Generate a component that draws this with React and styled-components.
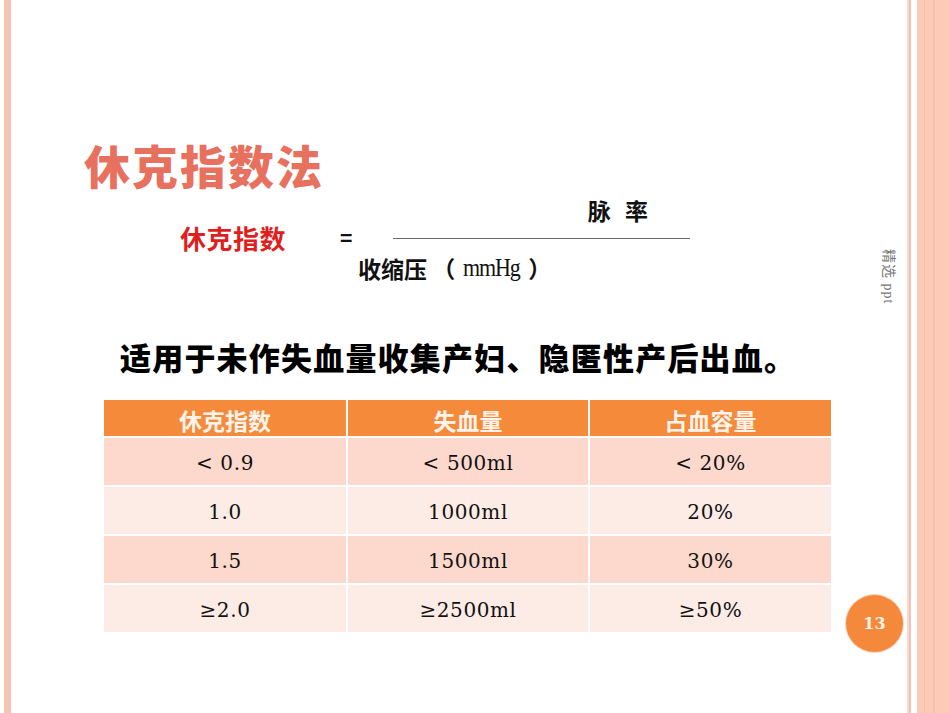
import React from "react";
import styled, { createGlobalStyle } from "styled-components";

const GlobalStyle = createGlobalStyle`
  html, body {
    margin: 0;
    padding: 0;
    background: #ffffff;
  }
  body {
    font-family: "Noto Sans CJK SC", "Liberation Sans", sans-serif;
  }
`;

const Slide = styled.div`
  width: 950px;
  height: 713px;
  display: flex;
  overflow: hidden;
  background: #ffffff;
`;

const LeftEdge = styled.div`
  width: 11px;
  flex: none;
  background: linear-gradient(
    to right,
    #ffffff 0 4px,
    #f6c3b4 4px 11px
  );
`;

const RightEdge = styled.div`
  width: 43px;
  flex: none;
  background: linear-gradient(
    to right,
    #fad8cf 0 2px,
    #f5c0b0 2px 4px,
    #ffffff 4px 10px,
    #fdcab8 10px 17px,
    #f7bfa9 17px 18px,
    #fdcab8 18px 26px,
    #f7bfa9 26px 28px,
    #fdcab8 28px 43px
  );
`;

const Main = styled.main`
  width: 834px;
  flex: none;
  display: flex;
  flex-direction: column;
  padding-top: 136px;
`;

const Title = styled.h1`
  margin: 0 0 0 73px;
  font-size: 46px;
  line-height: 56px;
  font-weight: 900;
  color: #e8705e;
  letter-spacing: 2px;
`;

const Formula = styled.div`
  margin: 4px 0 0 169px;
  display: grid;
  grid-template-columns: 160px 18px 35px 297px;
  grid-template-rows: 28px 26px 36px;
  align-items: center;
`;

const Label = styled.div`
  grid-column: 1;
  grid-row: 2;
  font-size: 26px;
  font-weight: 700;
  color: #e01e1e;
  letter-spacing: 0.5px;
`;

const Equals = styled.div`
  grid-column: 2;
  grid-row: 2;
  justify-self: start;
  font-size: 21px;
  font-weight: 700;
  color: #111;
`;

const Numerator = styled.div`
  grid-column: 3 / 5;
  grid-row: 1;
  justify-self: end;
  margin-right: 42px;
  font-size: 23px;
  font-weight: 700;
  color: #111;
  word-spacing: 9px;
`;

const Bar = styled.div`
  grid-column: 4;
  grid-row: 2;
  height: 1px;
  background: #6b6b6b;
  margin-top: 2px;
`;

const Denominator = styled.div`
  grid-column: 3 / 5;
  grid-row: 3;
  font-size: 23px;
  font-weight: 700;
  color: #111;
  display: flex;
  align-items: center;
  white-space: pre;
`;

const Unit = styled.span`
  font-family: "Liberation Serif", serif;
  font-weight: 400;
  font-size: 25px;
  letter-spacing: -1.2px;
  transform: scaleX(0.88);
  display: inline-block;
  margin: 0 -1px;
`;

const Note = styled.p`
  margin: 51px 0 0 109px;
  font-size: 31px;
  line-height: 40px;
  font-weight: 900;
  color: #000;
  letter-spacing: 1.2px;
`;

const Table = styled.div`
  margin: 23px 0 0 93px;
  width: 727px;
  display: grid;
  grid-template-columns: 242px 240px 241px;
  grid-auto-rows: 47px;
  grid-template-rows: 36px;
  gap: 2px;
`;

const HeadCell = styled.div`
  background: #f68a3b;
  color: #fff4ec;
  display: flex;
  align-items: center;
  justify-content: center;
  font-size: 23px;
  font-weight: 700;
  padding-top: 4px;
`;

const Cell = styled.div`
  background: ${p => (p.$odd ? "#fcd8cd" : "#fdebe6")};
  color: #111;
  display: flex;
  align-items: center;
  justify-content: center;
  font-family: "DejaVu Serif", "Liberation Serif", serif;
  font-size: 20px;
  font-weight: 400;
  letter-spacing: 0.6px;
  white-space: pre;
  padding-top: 3px;
`;

const Side = styled.aside`
  width: 62px;
  flex: none;
  display: flex;
  flex-direction: column;
  align-items: center;
`;

const SideNote = styled.div`
  margin-top: 249px;
  margin-left: 28px;
  writing-mode: vertical-rl;
  text-orientation: sideways;
  font-family: "Liberation Serif", "Noto Sans CJK SC", serif;
  font-size: 14px;
  color: #777;
  letter-spacing: 1px;
`;

const PageBadge = styled.div`
  margin-top: 291px;
  margin-left: -3px;
  width: 57px;
  height: 57px;
  border-radius: 50%;
  background: #f5893b;
  box-shadow: 0 0 0 1px #fbd6c3;
  color: #fff5ea;
  display: flex;
  align-items: center;
  justify-content: center;
  font-family: "DejaVu Serif", "Liberation Serif", serif;
  font-weight: 700;
  font-size: 16px;
`;

const headers = ["休克指数", "失血量", "占血容量"];
const rows = [
  ["< 0.9", "< 500ml", "< 20%"],
  ["1.0", "1000ml", "20%"],
  ["1.5", "1500ml", "30%"],
  ["≥2.0", "≥2500ml", "≥50%"]
];

export default function App() {
  return (
    <>
      <GlobalStyle />
      <Slide>
        <LeftEdge />
        <Main>
          <Title>休克指数法</Title>
          <Formula>
            <Numerator>脉 率</Numerator>
            <Label>休克指数</Label>
            <Equals>=</Equals>
            <Bar />
            <Denominator>
              {"收缩压 （ "}
              <Unit>mmHg</Unit>
              {" ）"}
            </Denominator>
          </Formula>
          <Note>适用于未作失血量收集产妇、隐匿性产后出血。</Note>
          <Table>
            {headers.map(h => (
              <HeadCell key={h}>{h}</HeadCell>
            ))}
            {rows.map((r, i) =>
              r.map((c, j) => (
                <Cell key={`${i}-${j}`} $odd={i % 2 === 0}>
                  {c}
                </Cell>
              ))
            )}
          </Table>
        </Main>
        <Side>
          <SideNote>精选 ppt</SideNote>
          <PageBadge>13</PageBadge>
        </Side>
        <RightEdge />
      </Slide>
    </>
  );
}
